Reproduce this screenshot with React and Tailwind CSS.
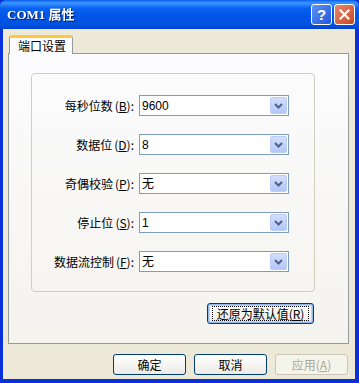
import React from 'react';

const cjk = { fontFamily: '"Noto Sans CJK SC", sans-serif' };
const sans = { fontFamily: '"Liberation Sans", "Noto Sans CJK SC", sans-serif' };

const rows = [
  { label: '每秒位数', key: 'B', value: '9600' },
  { label: '数据位', key: 'D', value: '8' },
  { label: '奇偶校验', key: 'P', value: '无' },
  { label: '停止位', key: 'S', value: '1' },
  { label: '数据流控制', key: 'F', value: '无' },
];

function Combo({ value }) {
  return (
    <div className="w-[150px] h-[21px] border border-[#7F9DB9] bg-white flex items-center">
      <span className="flex-1 pl-[2px] text-[12px] leading-none text-black" style={sans}>{value}</span>
      <div className="w-[17px] h-[17px] mr-[1px] rounded-[2px] bg-gradient-to-b from-[#D2DEFC] to-[#B3C8F8] border border-[#BACBF4] flex items-center justify-center">
        <svg width="9" height="6" viewBox="0 0 9 6">
          <path d="M1 1 L4.5 4.5 L8 1" fill="none" stroke="#4D6185" strokeWidth="2" />
        </svg>
      </div>
    </div>
  );
}

function Btn({ children, disabled, focused, w = 'w-[73px]' }) {
  return (
    <div
      className={`${w} h-[21px] rounded-[3px] border flex items-center justify-center text-[12px] ${
        disabled
          ? 'border-[#C9C7BA] bg-[#F5F4EA] text-[#ACA899]'
          : 'border-[#003C74] bg-gradient-to-b from-white to-[#ECEBE6] text-black'
      } ${focused ? 'shadow-[inset_0_0_0_1px_#98B8EA,inset_0_0_0_2px_#BCD4F6]' : ''}`}
      style={cjk}
    >
      {focused ? (
        <span className="px-[4px] border border-dotted border-black leading-[13px]">{children}</span>
      ) : (
        children
      )}
    </div>
  );
}

export default function App() {
  return (
    <div className="w-[359px] h-[383px] flex flex-col bg-[#0831D9] overflow-hidden">
      {/* Title bar */}
      <div className="h-[29px] shrink-0 flex items-center pl-[7px] pr-[4px] rounded-t-[6px] bg-[linear-gradient(to_bottom,#0A5EEB_0%,#3D95FF_10%,#0A62F2_28%,#0055E5_55%,#0053E1_85%,#0043D0_100%)]">
        <span className="flex-1 text-white font-bold text-[13px] leading-none drop-shadow-[1px_1px_0_#0A1E6E]" style={{ fontFamily: '"Liberation Serif", "Noto Sans CJK SC", serif' }}>
          COM1 属性
        </span>
        <div className="w-[21px] h-[21px] mr-[2px] rounded-[3px] border border-white bg-gradient-to-br from-[#5C93F7] to-[#2156D9] flex items-center justify-center text-white font-bold text-[15px] leading-none" style={sans}>
          ?
        </div>
        <div className="w-[21px] h-[21px] rounded-[3px] border border-white bg-gradient-to-br from-[#E7866A] to-[#C9461F] flex items-center justify-center">
          <svg width="11" height="11" viewBox="0 0 11 11">
            <path d="M1.5 1.5 L9.5 9.5 M9.5 1.5 L1.5 9.5" stroke="white" strokeWidth="2.2" strokeLinecap="square" />
          </svg>
        </div>
      </div>

      {/* Body */}
      <div className="flex-1 flex flex-col ml-[3px] mr-[4px] mb-[4px] bg-[#ECE9D8] pt-[6px] pl-[5px] pr-[6px]">
        {/* Tab */}
        <div className="relative z-10 -mb-px ml-[1px] w-[64px] h-[19px] rounded-t-[3px] border-t-[3px] border-t-[#FFC83C] border-x border-x-[#919B9C] bg-[#FCFCFE] flex items-center pl-[8px] text-[12px] text-black" style={cjk}>
          端口设置
        </div>
        {/* Panel */}
        <div className="h-[291px] border border-[#919B9C] bg-gradient-to-b from-[#FCFCFE] to-[#F4F3EE] pl-[22px] pt-[19px]">
          <div className="w-[284px] h-[219px] rounded-[4px] border border-[#D0D0BF] pt-[21px] flex flex-col gap-[18px]">
            {rows.map((r) => (
              <div key={r.key + r.label} className="flex items-center">
                <div className="w-[103px] text-right text-[12px] text-black pr-[1px]" style={cjk}>
                  {r.label}
                  <span className="ml-[2px]">(</span>
                  <span className="underline">{r.key}</span>
                  <span>):</span>
                </div>
                <div className="ml-[4px]">
                  <Combo value={r.value} />
                </div>
              </div>
            ))}
          </div>
          <div className="w-[284px] flex justify-end mt-[11px] pr-[1px]">
            <Btn focused w="w-[107px]">
              还原为默认值(<span className="underline">R</span>)
            </Btn>
          </div>
        </div>
        {/* Footer buttons */}
        <div className="flex justify-end gap-[8px] mt-[10px] pr-[1px]">
          <Btn>确定</Btn>
          <Btn>取消</Btn>
          <Btn disabled>
            应用(<span className="underline">A</span>)
          </Btn>
        </div>
      </div>
    </div>
  );
}
